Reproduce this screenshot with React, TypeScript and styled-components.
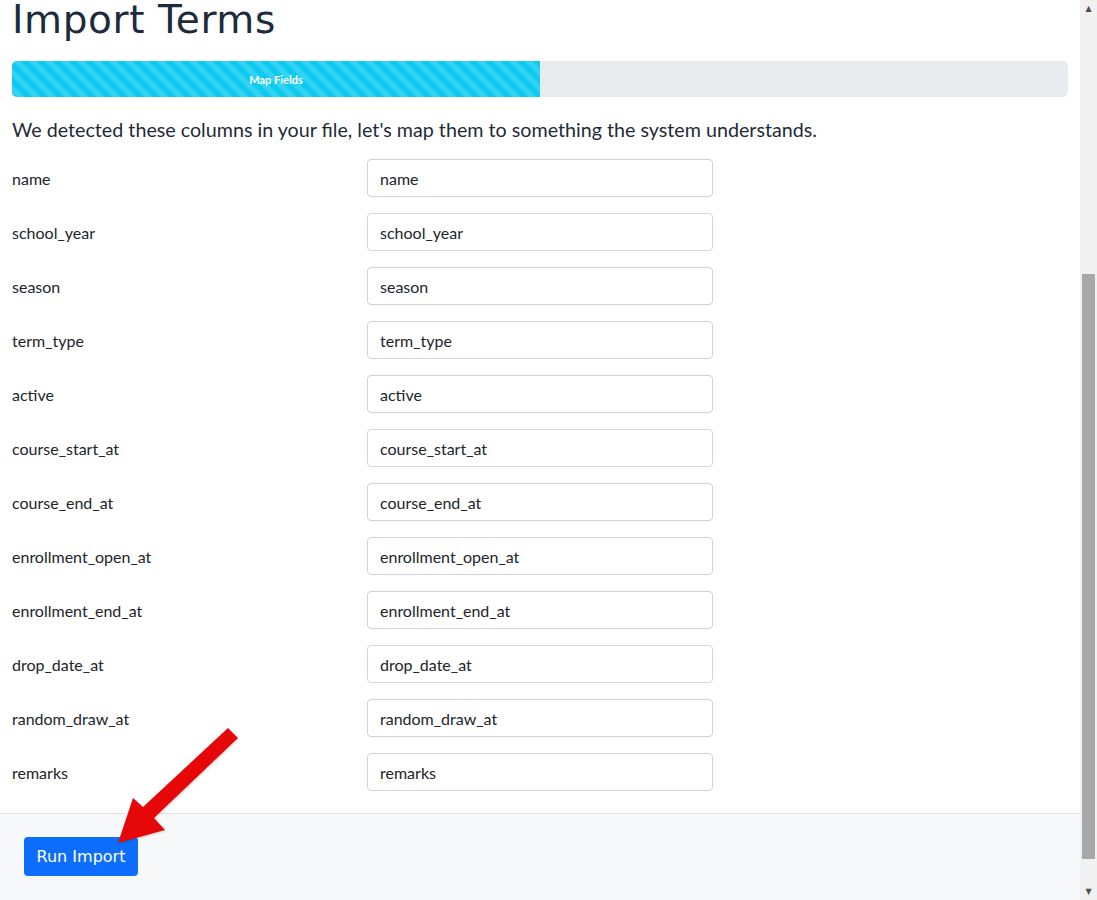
import React from "react";
import styled, { createGlobalStyle } from "styled-components";

const fields = [
  "name",
  "school_year",
  "season",
  "term_type",
  "active",
  "course_start_at",
  "course_end_at",
  "enrollment_open_at",
  "enrollment_end_at",
  "drop_date_at",
  "random_draw_at",
  "remarks",
];

const GlobalStyle = createGlobalStyle`
  html, body {
    margin: 0;
    padding: 0;
    overflow: hidden;
    background: #ffffff;
  }
`;

const App = () => {
  return (
    <>
      <GlobalStyle />
      <Page>
        <Main>
          <Content>
            <Title>Import Terms</Title>
            <Progress>
              <ProgressFill style={{ width: "50%" }}>Map Fields</ProgressFill>
            </Progress>
            <Lead>
              We detected these columns in your file, let's map them to
              something the system understands.
            </Lead>
            <FieldGrid>
              {fields.map((f) => (
                <React.Fragment key={f}>
                  <FieldLabel>{f}</FieldLabel>
                  <FieldInput defaultValue={f} />
                </React.Fragment>
              ))}
            </FieldGrid>
          </Content>
          <Footer>
            <RunButton>Run Import</RunButton>
          </Footer>
          <Arrow viewBox="0 0 140 130" width="140" height="130">
            <polygon
              points="8,123 23,78 33,87 118,8 128,18 44,98 55,110"
              fill="#e60808"
            />
          </Arrow>
        </Main>
        <Scrollbar>
          <ScrollArrow>▲</ScrollArrow>
          <Track>
            <Thumb />
          </Track>
          <ScrollArrow>▼</ScrollArrow>
        </Scrollbar>
      </Page>
    </>
  );
};

const Page = styled.div`
  display: flex;
  width: 1097px;
  height: 900px;
  overflow: hidden;
`;

const Main = styled.div`
  position: relative;
  flex: 1;
  display: flex;
  flex-direction: column;
  min-width: 0;
`;

const Content = styled.div`
  flex: 1;
  padding: 0 12px;
`;

const Title = styled.h1`
  margin: -4px 0 0;
  font-family: "DejaVu Sans", "Open Sans", sans-serif;
  font-weight: 400;
  font-size: 39px;
  line-height: 47px;
  color: #1d2b3d;
  letter-spacing: 0.6px;
`;

const Progress = styled.div`
  margin-top: 18px;
  height: 36px;
  border-radius: 5px;
  background: #e8ebee;
  overflow: hidden;
  display: flex;
`;

const ProgressFill = styled.div`
  display: flex;
  align-items: center;
  justify-content: center;
  background-color: #0dcaf0;
  background-image: linear-gradient(
    45deg,
    rgba(255, 255, 255, 0.15) 25%,
    transparent 25%,
    transparent 50%,
    rgba(255, 255, 255, 0.15) 50%,
    rgba(255, 255, 255, 0.15) 75%,
    transparent 75%,
    transparent
  );
  background-size: 16px 16px;
  color: #ffffff;
  font-family: Lato, "Open Sans", sans-serif;
  font-weight: 700;
  font-size: 11px;
`;

const Lead = styled.p`
  margin: 19px 0 15px;
  font-family: Lato, "Open Sans", sans-serif;
  font-size: 19.7px;
  line-height: 28px;
  color: #1f2a37;
`;

const FieldGrid = styled.div`
  display: grid;
  grid-template-columns: 355px 346px;
  row-gap: 16px;
  align-items: center;
`;

const FieldLabel = styled.div`
  font-family: Lato, "Open Sans", sans-serif;
  font-size: 16px;
  color: #212529;
`;

const FieldInput = styled.input`
  box-sizing: border-box;
  height: 38px;
  width: 346px;
  padding: 0 12px;
  border: 1px solid #ced4da;
  border-radius: 4px;
  font-family: Lato, "Open Sans", sans-serif;
  font-size: 16px;
  color: #212529;
  background: #ffffff;
  outline: none;
`;

const Footer = styled.div`
  border-top: 1px solid #dfe2e6;
  background: #f7f8fa;
  padding: 23px 24px 24px;
`;

const RunButton = styled.button`
  height: 39px;
  width: 114px;
  padding: 0;
  border: none;
  border-radius: 4px;
  background: #0d6efd;
  color: #ffffff;
  font-family: "DejaVu Sans", "Open Sans", sans-serif;
  font-size: 16px;
  cursor: pointer;
`;

const Arrow = styled.svg`
  position: absolute;
  left: 110px;
  top: 720px;
  filter: drop-shadow(1px 1px 1px rgba(0, 0, 0, 0.15));
`;

const Scrollbar = styled.div`
  width: 17px;
  background: #f1f1f1;
  display: flex;
  flex-direction: column;
`;

const ScrollArrow = styled.div`
  height: 17px;
  display: flex;
  align-items: center;
  justify-content: center;
  font-size: 8px;
  color: #505050;
  font-family: "DejaVu Sans", sans-serif;
`;

const Track = styled.div`
  flex: 1;
  display: flex;
  flex-direction: column;
  justify-content: flex-end;
  padding: 0 2px 24px;
`;

const Thumb = styled.div`
  height: 585px;
  background: #a8a8a8;
`;

export default App;
